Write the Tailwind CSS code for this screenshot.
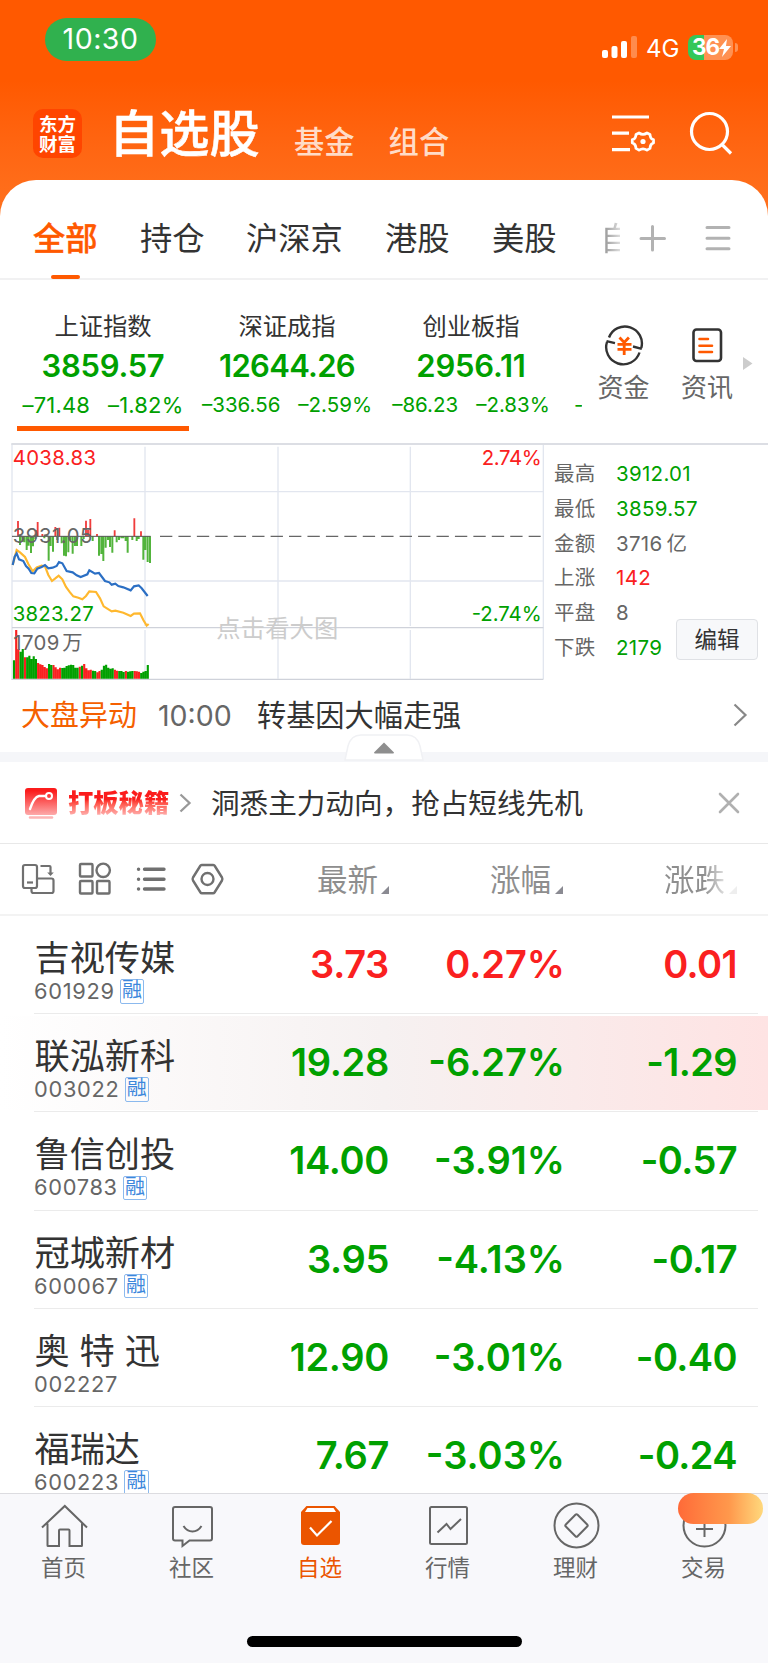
<!DOCTYPE html>
<html lang="zh-CN">
<head>
<meta charset="utf-8">
<title>自选股</title>
<script src="https://cdn.jsdelivr.net/npm/@tailwindcss/browser@4"></script>
</head>
<body class="w-[768px] h-[1663px] overflow-hidden bg-white text-[#333] font-['Inter','Noto_Sans_CJK_SC',sans-serif] whitespace-nowrap">
<div class="relative flex flex-col w-[768px] h-[1663px] overflow-hidden">

<!-- Header -->
<header class="shrink-0 h-[230px] -mb-[50px] bg-linear-to-b from-[#ff5900] from-35% to-[#ff7420] text-white">
  <div class="flex h-[79px] pl-[45px] pr-[30px] pt-[18px] items-start">
    <div class="w-[111px] h-[43px] rounded-full bg-[#30b14e] flex items-center justify-center text-[28.500px] leading-none tracking-[0.500px]">10:30</div>
    <svg class="ml-auto mt-[17px]" width="38" height="24" viewBox="0 0 38 24"><g fill="#fff"><rect x="2" y="15" width="6" height="8" rx="2"/><rect x="11.5" y="11" width="6" height="12" rx="2"/><rect x="21" y="6" width="6" height="17" rx="2"/><rect x="31" y="1" width="6" height="22" rx="2" opacity=".3"/></g></svg>
    <div class="ml-[8px] mt-[18px] text-[24px] leading-[26px] w-[35px]">4G</div>
    <div class="ml-[7px] mt-[17px] w-[45px] h-[25px] rounded-[8px] overflow-hidden bg-linear-to-r from-[#34c759] from-36% to-[#ff9152] to-36% flex items-center pl-[4px] text-[22.5px] font-bold leading-none tracking-[-1px]">36<svg width="12" height="18" viewBox="0 0 12 18"><path d="M8 0 0 10h5l-2 8 9-11H7z" fill="#fff"/></svg></div>
    <div class="ml-[2px] mt-[25px] w-[3px] h-[9px] rounded-r-full bg-[#ff9152]"></div>
  </div>
  <div class="flex h-[101px] pl-[33px] items-start">
    <div class="mt-[30px] w-[49px] h-[49px] rounded-[10px] bg-[#ff4500] flex flex-col items-center justify-center text-[18.500px] leading-[20px] font-bold"><span>东方</span><span>财富</span></div>
    <div class="ml-[27px] mt-[25px] w-[152px] text-[50.200px] leading-[60px] font-medium [-webkit-text-stroke:0.5px_white]">自选股</div>
    <div class="ml-[33px] mt-[43px] text-[30.300px] leading-[40px] text-[#ffdcc8] font-medium">基金</div>
    <div class="ml-[34px] mt-[43px] text-[30.300px] leading-[40px] text-[#ffdcc8] font-medium">组合</div>
    <svg class="ml-auto mt-[30px]" width="48" height="50" viewBox="0 0 48 50" fill="none" stroke="#fff" stroke-width="3.2"><path d="M4 8h37M4 24.2h17M4 40.7h18"/><path stroke-width="2.8" stroke-linejoin="round" d="M31 24q4 2.600 8 0l3 1.500q.3 4.500 3.500 5.200v3.200q-3.200 1-3.500 5.500l-3 1.700q-4-2.600-8 0l-3-1.700q-.3-4.500-3.700-5.500v-3.200q3.400-.7 3.700-5.200z"/><circle cx="35" cy="32.500" r="2.600" fill="#fff" stroke="none"/></svg>
    <svg class="ml-[31px] mr-[32px] mt-[30px]" width="49" height="50" viewBox="0 0 49 50" fill="none" stroke="#fff" stroke-width="3.200"><circle cx="22.500" cy="22.500" r="18"/><path d="M35 35.500l9 9"/></svg>
  </div>
</header>

<!-- Category tabs -->
<nav class="relative shrink-0 h-[100px] bg-white rounded-t-[36px] border-b-2 border-[#f1f1f2] flex text-[32.300px] leading-[48px] pt-[35px] pl-[33px]">
  <div class="relative w-[107px] text-[#ff5900] font-medium [-webkit-text-stroke:0.4px_#ff5900]">全部<span class="absolute left-[18px] top-[60px] w-[29px] h-[4px] rounded-full bg-[#ff5900]"></span></div>
  <div class="w-[106px]">持仓</div>
  <div class="w-[139px]">沪深京</div>
  <div class="w-[107px]">港股</div>
  <div class="w-[108px]">美股</div>
  <div class="w-[20px] overflow-hidden bg-linear-to-r from-[#888] to-[#ddd] bg-clip-text text-transparent">自</div>
  <svg class="ml-[18px] mt-[9px]" width="30" height="30" viewBox="0 0 30 30" stroke="#b2b2b2" stroke-width="3" stroke-linecap="round"><path d="M3 14.500h23.500M14.500 2.500V26"/></svg>
  <svg class="ml-[35px] mt-[9px]" width="30" height="30" viewBox="0 0 30 30" stroke="#b2b2b2" stroke-width="3" stroke-linecap="round"><path d="M4 3.500h22M4 14.200h22M4 24.700h22"/></svg>
</nav>

<!-- Indices -->
<section class="shrink-0 h-[163px] flex text-[#00a000]">
  <div class="w-[582px] pl-[11px] flex overflow-hidden">
    <div class="relative shrink-0 w-[184px] flex flex-col items-center pt-[31px]">
      <div class="text-[24.300px] leading-[30px] text-[#333]">上证指数</div>
      <div class="mt-[7px] text-[31px] leading-[36px] font-semibold tracking-[-0.3px]">3859.57</div>
      <div class="mt-[6px] flex gap-[18px] text-[22px] leading-[30px] tracking-[0.150px]"><span>–71.48</span><span>–1.82%</span></div>
      <div class="mt-[6px] -ml-[1px] w-[172px] h-[5px] bg-[#ff5900]"></div>
    </div>
    <div class="shrink-0 w-[184px] flex flex-col items-center pt-[31px]">
      <div class="text-[24.300px] leading-[30px] text-[#333]">深证成指</div>
      <div class="mt-[7px] text-[31px] leading-[36px] font-semibold tracking-[-0.7px]">12644.26</div>
      <div class="mt-[6px] flex gap-[18px] text-[20.500px] leading-[30px]"><span>–336.56</span><span>–2.59%</span></div>
    </div>
    <div class="shrink-0 w-[184px] flex flex-col items-center pt-[31px]">
      <div class="text-[24.300px] leading-[30px] text-[#333]">创业板指</div>
      <div class="mt-[7px] text-[31px] leading-[36px] font-semibold tracking-[-0.2px]">2956.11</div>
      <div class="mt-[6px] flex gap-[18px] text-[20.500px] leading-[30px]"><span>–86.23</span><span>–2.83%</span></div>
    </div>
    <div class="shrink-0 pt-[110px] pl-[11px] text-[20.500px] leading-[30px]">-</div>
  </div>
  <div class="w-[83px] flex flex-col items-center pt-[44px] text-[#666]">
    <svg width="42" height="42" viewBox="0 0 42 42" fill="none" stroke="#333" stroke-width="2.400"><path d="M6 13.500A17 17 0 0 1 38.300 24M38.800 24.800 30 22.500M36.500 28.500A17 17 0 0 1 4 18M3.500 17.200l8.500 2" /><g stroke="#ff5900" stroke-width="2.800"><path d="M16.500 13.500l4.700 5 4.700-5M14.500 20.300h14M14.500 25.300h14M21.200 18.500v12.500"/></g></svg>
    <div class="mt-[6px] text-[26px] leading-[32px]">资金</div>
  </div>
  <div class="w-[84px] flex flex-col items-center pt-[44px] text-[#666]">
    <svg width="42" height="42" viewBox="0 0 42 42" fill="none" stroke="#333" stroke-width="2.600"><rect x="7.500" y="5.500" width="27.500" height="31.500" rx="3"/><path stroke="#ff5900" stroke-linecap="round" d="M13.500 15h8.500M13.500 21.700h12.500M13.500 28h12.500"/></svg>
    <div class="mt-[6px] text-[26px] leading-[32px]">资讯</div>
  </div>
  <svg class="-ml-[7px] mt-[76px]" width="12" height="15" viewBox="0 0 12 15"><path d="M1 1v13l9.500-6.500z" fill="#ccc"/></svg>
</section>

<!-- Chart and market stats -->
<section class="shrink-0 h-[237px] flex relative">
  <svg width="544" height="237" viewBox="0 24 1632 711" font-family="Inter, 'Noto Sans CJK SC', sans-serif" font-size="61">
    <g stroke="#e2e6ef" stroke-width="4" fill="none"><path d="M36 26V733M435 35V573M435 585V731M834 35V573M834 585V731M1231 35V573M1231 585V731M1630 26V733"/><path d="M36 170H1630M36 438H1630"/></g>
    <path d="M36 578H1630M34 733H1630" stroke="#cfd2da" stroke-width="4"/>
    <path d="M34 27H1632" stroke="#dcdee4" stroke-width="6"/>
    <text x="649" y="606" font-size="73" fill="#ccc" textLength="366">点击看大图</text>
    <path id="flow-up" stroke="#f03c3c" stroke-width="5.500"/>
    <path id="flow-down" stroke="#52b43c" stroke-width="6"/>
    <path d="M36 304H452" stroke="#555" stroke-width="3"/>
    <path d="M480 304H1622" stroke="#666" stroke-width="4" stroke-dasharray="37 18.300"/>
    <path id="vol-up" stroke="#fa2020" stroke-width="6.400"/>
    <path id="vol-down" stroke="#00a000" stroke-width="6.400"/>
    <polyline fill="none" stroke="#ffb82e" stroke-width="6.500" points="38,390 50,345 60,352 75,366 85,387 98,409 110,397 125,392 135,394 145,420 156,438 165,431 176,422 187,433 198,456 210,472 220,484 235,488 247,493 258,483 268,469 288,471 300,490 311,514 335,529 346,527 370,533 392,543 402,536 420,535 430,555 440,572 446,567"/>
    <polyline fill="none" stroke="#2b6fc4" stroke-width="6.500" points="38,390 44,365 50,355 57,373 70,378 78,393 86,401 94,414 103,415 112,401 125,396 135,390 145,400 158,398 170,393 177,381 187,385 200,408 218,412 230,421 242,426 262,418 268,406 285,416 297,414 315,438 328,442 335,449 346,446 355,453 370,457 392,466 402,454 416,451 425,460 443,483"/>
    <text x="38" y="91" fill="#fa2020" textLength="250">4038.83</text>
    <text x="38" y="324" fill="#666" textLength="239">3931.05</text>
    <text x="38" y="557" fill="#00a000" textLength="243">3823.27</text>
    <text x="40" y="645" fill="#666" textLength="138">1709</text><text x="187" y="645" fill="#666">万</text>
    <text x="1445" y="91" fill="#fa2020" textLength="180">2.74%</text>
    <text x="1415" y="557" fill="#00a000" textLength="210">-2.74%</text>
  </svg>
  <div class="flex-1 border-t-2 border-[#dcdee4] pt-[12px] pl-[10px] grid grid-cols-[62px_1fr] auto-rows-[34.800px] content-start items-center text-[20.500px] text-[#666] tracking-[0.3px]">
    <span>最高</span><span class="text-[#00a000]">3912.01</span>
    <span>最低</span><span class="text-[#00a000]">3859.57</span>
    <span>金额</span><span>3716<span class="ml-[4px]">亿</span></span>
    <span>上涨</span><span class="text-[#fa2020]">142</span>
    <span>平盘</span><span>8</span>
    <span>下跌</span><span class="text-[#00a000]">2179</span>
  </div>
  <button class="absolute left-[676px] top-[176px] w-[82px] h-[41px] rounded-[4px] border-[1.500px] border-[#dfe1e5] bg-[#f7f8fa] text-[22.500px] leading-[37px]">编辑</button>
</section>

<!-- Market event -->
<section class="relative shrink-0 h-[82px] border-b-[10px] border-[#f5f6f9] flex text-[29px] leading-[40px] pt-[16px] pl-[21px]">
  <div class="w-[116px] text-[#f56000]">大盘异动</div>
  <div class="ml-[21px] w-[99px] text-[28.500px] text-[#666]">10:00</div>
  <div class="text-[29.200px]">转基因大幅走强</div>
  <svg class="ml-auto mr-[18px] mt-[7px]" width="18" height="24" viewBox="0 0 18 24" fill="none" stroke="#888" stroke-width="2.200"><path d="M2.500 1.500 13.500 12 2.500 22.500"/></svg>
  <svg class="absolute left-[344px] top-[54px]" width="80" height="28" viewBox="0 0 80 28"><path d="M1 26 4 12Q7 1 17 1h46q10 0 13 11l3 14z" fill="#fff" stroke="#f0f1f4" stroke-width="1.500"/><path d="M40 8.500 50 18.500q0 1-1 1H31q-1 0-1-1z" fill="#8e8e8e"/></svg>
</section>

<!-- Promo -->
<section class="shrink-0 h-[82px] border-b border-[#e8e8e8] flex items-center pl-[24px]">
  <svg width="34" height="34" viewBox="0 0 34 34"><defs><linearGradient id="promo" x2="0" y2="1"><stop offset=".1" stop-color="#fb1c1c"/><stop offset="1" stop-color="#fdaaaa"/></linearGradient></defs><rect x="1" y="2" width="32" height="27" rx="3" fill="url(#promo)"/><path d="M6 23q4-12 9-13h7" fill="none" stroke="#fff" stroke-width="2.400" stroke-linecap="round"/><circle cx="25" cy="10" r="3" fill="none" stroke="#fff" stroke-width="2"/><path d="M6 31.500h22" stroke="#fdb5b5" stroke-width="2.500" stroke-linecap="round"/></svg>
  <div class="ml-[10px] w-[102px] text-[25.300px] leading-[36px] font-black bg-linear-to-b from-[#fb1c1c] from-40% to-[#fdb0b0] to-85% bg-clip-text text-transparent">打板秘籍</div>
  <svg class="ml-[9px]" width="14" height="22" viewBox="0 0 14 22" fill="none" stroke="#999" stroke-width="2.300"><path d="M1.500 2.500 10.500 11 1.500 19.500"/></svg>
  <div class="ml-[18px] mt-[2px] text-[28.600px] leading-[40px]">洞悉主力动向，抢占短线先机</div>
  <svg class="ml-auto mr-[27px]" width="24" height="24" viewBox="0 0 24 24" stroke="#b0b0b0" stroke-width="2.600" stroke-linecap="round"><path d="M3 3 21 21M21 3 3 21"/></svg>
</section>

<!-- List header -->
<section class="shrink-0 h-[72px] border-b-2 border-[#f3f3f3] flex items-center text-[30.500px] leading-[40px] text-[#8e8e8e]">
  <svg class="ml-[20px]" width="36" height="36" viewBox="0 0 36 36" fill="none" stroke="#707070" stroke-width="2.200"><rect x="3" y="4" width="14" height="23" rx="2"/><path d="M7 21.500h6"/><path d="M11.500 27.500V30q0 2 2 2h18q2 0 2-2V19.500q0-2-2-2H17"/><path d="M20.500 5h9q1 0 1 1v7"/><path d="M27.200 11.500h6.600L30.500 15z" fill="#707070" stroke="none"/></svg>
  <svg class="ml-[20.500px]" width="36" height="36" viewBox="0 0 36 36" fill="none" stroke="#707070" stroke-width="2.400"><rect x="3" y="3" width="12.500" height="12.500" rx="1"/><circle cx="26.200" cy="9.300" r="6.700"/><rect x="3" y="20" width="12.500" height="12.500" rx="1"/><rect x="20" y="20" width="12.500" height="12.500" rx="1"/></svg>
  <svg class="ml-[22px]" width="36" height="36" viewBox="0 0 36 36" stroke="#707070" stroke-width="3.400" stroke-linecap="round"><path d="M9.500 8.300H29M9.500 18.200H29M9.500 28H29M3.500 8.300h.1M3.500 18.200h.1M3.500 28h.1"/></svg>
  <svg class="ml-[19.500px]" width="36" height="36" viewBox="0 0 36 36" fill="none" stroke="#707070" stroke-width="2.400" stroke-linejoin="round"><path d="M10.500 4.500Q11 4 12 4h11q1 0 1.500.5l7.500 12q.8 1.500 0 3l-7.500 12q-.5.800-1.500.8H12q-1 0-1.500-.8L3 19.500q-.8-1.500 0-3z"/><circle cx="17.500" cy="18" r="6"/></svg>
  <div class="ml-[91px] mt-[2px] w-[61px]">最新</div><svg class="ml-[3px] mt-[22px]" width="8" height="8"><path d="M8 0v8H0z" fill="#8a8a92"/></svg>
  <div class="ml-[101px] mt-[2px] w-[61px]">涨幅</div><svg class="ml-[4px] mt-[22px]" width="8" height="8"><path d="M8 0v8H0z" fill="#8a8a92"/></svg>
  <div class="ml-[101px] mt-[2px] w-[61px] bg-linear-to-r from-[#8e8e8e] from-65% to-[#e0e0e0] bg-clip-text text-transparent">涨跌</div><svg class="ml-[4px] mt-[22px]" width="8" height="8"><path d="M8 0v8H0z" fill="#eee"/></svg>
</section>

<!-- Watch list -->
<main id="list" class="shrink-0 h-[577px] overflow-hidden"></main>

<template id="row">
  <div class="relative h-[98.200px] pl-[34px]">
    <div class="h-full w-[724px] border-b-[1.500px] border-[#ebebeb] flex items-start">
      <div class="w-[205px]">
        <div data-f="name" class="mt-[19px] ml-[0.500px] text-[35.200px] leading-[46px]"></div>
        <div class="-mt-[2px] flex items-center h-[25px]"><span data-f="code" class="text-[21.800px] leading-[25px] text-[#666] tracking-[0.700px]"></span><span data-f="tag" class="ml-[5px] w-[24.500px] h-[24.500px] border-[1.500px] border-[#8bb9ee] rounded-[2px] text-[#3c87dc] text-[20px] leading-[21px] text-center flex justify-center">融</span></div>
      </div>
      <div data-f="price" class="mt-[25px] w-[150px] text-right text-[38px] leading-[46px] font-semibold tracking-[-0.300px]"></div>
      <div data-f="pct" class="mt-[25px] w-[176px] text-right text-[38px] leading-[46px] font-semibold"></div>
      <div data-f="chg" class="mt-[25px] w-[172px] text-right text-[38px] leading-[46px] font-semibold tracking-[-0.600px]"></div>
    </div>
  </div>
</template>

<!-- Bottom navigation -->
<footer class="relative shrink-0 h-[170px] bg-[#f8f8fb] border-t border-[#dcdce0] text-[#666] text-[22.500px] leading-[30px]">
  <div class="grid grid-cols-6 -ml-[0.500px] w-[768px] text-center pt-[6px]">
    <div class="flex flex-col items-center"><svg width="50" height="52" viewBox="0 0 50 52" fill="none" stroke="#666" stroke-width="2"><path d="M3 27.500 25.800 6 48 27.500M8.500 23.500V45.500q0 .5.500.5H20V30.500q0-1 1-1h8.500q1 0 1 1V46H42.500q.5 0 .5-.5V23.500"/></svg><span class="mt-[1px]">首页</span></div>
    <div class="flex flex-col items-center"><svg width="50" height="52" viewBox="0 0 50 52" fill="none" stroke="#666" stroke-width="2"><path d="M8 7h35q2 0 2 2V38.500q0 2-2 2H22.500L15.500 46v-5.500H8q-2 0-2-2V9q0-2 2-2z"/><path d="M16.500 26q3.500 5.500 9 5.500t9-5.500"/></svg><span class="mt-[1px]">社区</span></div>
    <div class="flex flex-col items-center text-[#eb5500]"><svg width="50" height="52" viewBox="0 0 50 52" fill="none"><path d="M11.500 6h28l5.500 6V42q0 3-3 3H9q-3 0-3-3V12z" fill="#eb5500"/><path d="M12.500 8h26l2.500 4H10z" fill="#fff"/><path d="M15 27.500 22 35.500 36.500 21" stroke="#fff" stroke-width="2.200"/></svg><span class="mt-[1px]">自选</span></div>
    <div class="flex flex-col items-center"><svg width="50" height="52" viewBox="0 0 50 52" fill="none" stroke="#666" stroke-width="2"><rect x="7" y="7" width="37" height="37" rx="1.500"/><path d="M14.500 32.500 23.500 24 27.500 29 38 19"/></svg><span class="mt-[1px]">行情</span></div>
    <div class="flex flex-col items-center"><svg width="50" height="52" viewBox="0 0 50 52" fill="none" stroke="#666" stroke-width="2"><circle cx="25.500" cy="25.500" r="22"/><rect x="17.200" y="17.200" width="16.600" height="16.600" rx="1.500" transform="rotate(45 25.500 25.500)"/></svg><span class="mt-[1px]">理财</span></div>
    <div class="flex flex-col items-center"><svg width="50" height="52" viewBox="0 0 50 52" fill="none" stroke="#666" stroke-width="2"><circle cx="25.500" cy="25.500" r="21"/><path d="M17 29h17M25.500 21v16"/></svg><span class="mt-[1px]">交易</span></div>
  </div>
  <div class="absolute left-[678px] top-[-1px] w-[85px] h-[31px] rounded-[16px] bg-linear-to-r from-[#ff6a38] via-[#ff984c] via-60% to-[#fed87c]"></div>
  <div class="mt-[53px] ml-[247px] w-[275px] h-[11px] rounded-full bg-black"></div>
</footer>
</div>

<script>
const rows = [
  ['吉视传媒', '601929', 1, '3.73', '0.27%', '0.01'],
  ['联泓新科', '003022', 1, '19.28', '-6.27%', '-1.29'],
  ['鲁信创投', '600783', 1, '14.00', '-3.91%', '-0.57'],
  ['冠城新材', '600067', 1, '3.95', '-4.13%', '-0.17'],
  ['奥 特 迅', '002227', 0, '12.90', '-3.01%', '-0.40'],
  ['福瑞达', '600223', 1, '7.67', '-3.03%', '-0.24'],
];
const tpl = document.getElementById('row'), list = document.getElementById('list');
rows.forEach((r, i) => {
  const n = tpl.content.cloneNode(true);
  const f = k => n.querySelector(`[data-f=${k}]`);
  f('name').textContent = r[0];
  f('code').textContent = r[1];
  if (!r[2]) f('tag').remove();
  ['price', 'pct', 'chg'].forEach((k, j) => {
    f(k).textContent = r[3 + j];
    f(k).classList.add(i === 0 ? 'text-[#fa2020]' : 'text-[#00a000]');
  });
  if (i === 1) {
    const bg = document.createElement('div');
    bg.className = 'absolute left-0 top-[2px] -z-10 w-[768px] h-[94px] bg-linear-to-r from-white via-[#f6f1f1] via-50% to-[#fee3e3]';
    n.firstElementChild.prepend(bg);
  }
  list.append(n);
});

const bars = (id, pts, base) => document.getElementById(id).setAttribute('d', pts.map(([x, y]) => `M${x} ${base}V${y}`).join(''));
bars('flow-up', [[54,258],[107,285],[113,261],[127,297],[166,276],[178,278],[258,257],[264,285],[271,252],[291,297],[344,286],[403,250],[423,289]], 304);
bars('flow-down', [[60,330],[67,320],[73,322],[80,345],[86,332],[93,354],[99,334],[106,312],[133,310],[146,377],[152,333],[159,350],[172,315],[185,325],[192,362],[198,364],[205,352],[211,315],[218,356],[225,333],[231,333],[244,333],[251,312],[278,318],[297,362],[304,357],[310,378],[317,338],[324,315],[330,336],[337,353],[350,322],[357,315],[364,310],[370,310],[377,318],[383,353],[397,315],[410,318],[416,312],[430,374],[436,345],[443,381],[450,384]], 304);
const vol = 'g676 r585 r642 g650 g642 r667 g667 g662 g672 g664 g672 r684 r688 r690 r696 r700 g687 g690 r690 r697 r703 r698 g699 g698 g693 g691 g689 g690 g698 g698 r695 g692 r687 r700 r706 r704 g707 g708 r712 r708 g704 g692 g689 g698 g701 g700 r704 r707 g708 g708 g711 r708 g710 g709 g708 r708 r709 r710 g714 g710 g708 g690'.split(' ');
const side = c => vol.map((v, i) => [v[0], (42 + i * 6.58).toFixed(1), +v.slice(1)]).filter(v => v[0] === c).map(v => [v[1], v[2]]);
bars('vol-up', side('r'), 731);
bars('vol-down', side('g'), 731);
</script>
</body>
</html>
